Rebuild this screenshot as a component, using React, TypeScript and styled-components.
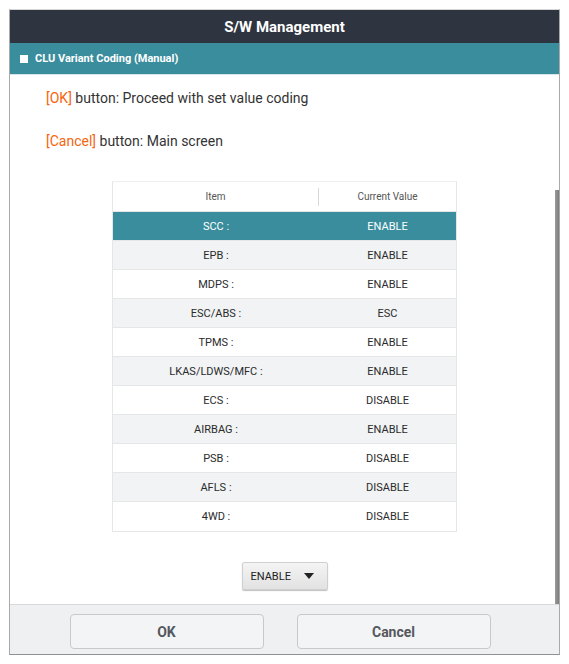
import * as React from 'react';
import styled, {createGlobalStyle} from 'styled-components';

const GlobalStyle = createGlobalStyle`
  html, body {
    margin: 0;
    padding: 0;
    background: #ffffff;
    font-family: Roboto, "Liberation Sans", Arial, sans-serif;
  }
`;

const Page = styled.div`
  padding: 9px 0 0 9px;
  width: 569px;
  height: 664px;
  box-sizing: border-box;
`;

const Dialog = styled.div`
  width: 551px;
  height: 646px;
  box-sizing: border-box;
  border-top: 1px solid #d6d6d6;
  border-left: 1px solid #a9a9a9;
  border-right: 1px solid #a9a9a9;
  border-bottom: 1px solid #8e9197;
  display: flex;
  flex-direction: column;
`;

const TitleBar = styled.div`
  height: 33px;
  background: #2e3440;
  color: #ffffff;
  font-size: 15px;
  font-weight: 700;
  display: flex;
  align-items: center;
  justify-content: center;
  flex: none;
`;

const SubBar = styled.div`
  height: 31px;
  background: #3a8d9d;
  border-bottom: 1px solid #d3e6ea;
  color: #ffffff;
  font-size: 11px;
  font-weight: 700;
  display: flex;
  align-items: center;
  gap: 7px;
  padding-left: 10px;
  flex: none;
`;

const Square = styled.span`
  width: 8px;
  height: 8px;
  background: #ffffff;
`;

const Body = styled.div`
  flex: 1;
  display: flex;
  min-height: 0;
`;

const Content = styled.div`
  flex: 1;
  display: flex;
  flex-direction: column;
  padding-top: 13px;
  padding-left: 4px;
`;

const ScrollTrack = styled.div`
  width: 4px;
  display: flex;
  flex-direction: column;
  padding-top: 115px;
`;

const ScrollThumb = styled.div`
  flex: 1;
  background: linear-gradient(to right, #9a9a9a, #7d7d7d);
`;

const Note = styled.div`
  font-size: 14px;
  line-height: 20px;
  color: #333333;
  padding-left: 32px;
  margin-bottom: 23px;
`;

const Key = styled.span`
  color: #f5650f;
`;

const Table = styled.div`
  width: 345px;
  margin: 7px auto 0 auto;
  border: 1px solid #e4e6e8;
  border-top-color: #eceef0;
  box-sizing: border-box;
`;

const HeaderRow = styled.div`
  display: grid;
  grid-template-columns: 206px 1fr;
  height: 30px;
  align-items: center;
  font-size: 10px;
  color: #555555;
  border-bottom: 1px solid #e4e6e8;
  box-sizing: border-box;
`;

const HeaderCell = styled.div<{divider?: boolean}>`
  text-align: center;
  height: 18px;
  line-height: 18px;
  border-right: ${(p) => (p.divider ? '1px solid #d6d8da' : 'none')};
`;

const Row = styled.div<{tone: 'sel' | 'alt' | 'plain'}>`
  display: grid;
  grid-template-columns: 206px 1fr;
  height: 29px;
  align-items: center;
  font-size: 11px;
  box-sizing: border-box;
  border-bottom: 1px solid #e4e6e8;
  background: ${(p) => (p.tone === 'sel' ? '#3a8d9d' : p.tone === 'alt' ? '#f1f3f4' : '#ffffff')};
  color: ${(p) => (p.tone === 'sel' ? '#ffffff' : '#2b2b2b')};
  &:last-child {
    border-bottom: none;
  }
`;

const Cell = styled.div`
  text-align: center;
`;

const Dropdown = styled.div`
  align-self: center;
  margin-top: 30px;
  width: 86px;
  height: 28px;
  box-sizing: border-box;
  border: 1px solid #cfcfcf;
  border-radius: 2px;
  background: linear-gradient(#f4f4f4, #e2e2e2);
  box-shadow: 0 1px 1px rgba(0, 0, 0, 0.25);
  display: flex;
  align-items: center;
  padding-left: 8px;
  gap: 13px;
  font-size: 11px;
  color: #222222;
`;

const Caret = styled.span`
  width: 0;
  height: 0;
  border-left: 5px solid transparent;
  border-right: 5px solid transparent;
  border-top: 6px solid #222222;
`;

const Footer = styled.div`
  height: 50px;
  flex: none;
  box-sizing: border-box;
  background: #eff0f2;
  border-top: 1px solid #d8d9db;
  display: flex;
  justify-content: center;
  gap: 33px;
  padding-top: 9px;
  padding-right: 9px;
`;

const Button = styled.div`
  width: 194px;
  height: 35px;
  box-sizing: border-box;
  border: 1px solid #c8c9cb;
  border-radius: 4px;
  background: #f3f4f5;
  display: flex;
  align-items: center;
  justify-content: center;
  font-size: 14px;
  font-weight: 700;
  color: #55585e;
`;

const rows: [string, string][] = [
  ['SCC :', 'ENABLE'],
  ['EPB :', 'ENABLE'],
  ['MDPS :', 'ENABLE'],
  ['ESC/ABS :', 'ESC'],
  ['TPMS :', 'ENABLE'],
  ['LKAS/LDWS/MFC :', 'ENABLE'],
  ['ECS :', 'DISABLE'],
  ['AIRBAG :', 'ENABLE'],
  ['PSB :', 'DISABLE'],
  ['AFLS :', 'DISABLE'],
  ['4WD :', 'DISABLE'],
];

const App: React.FunctionComponent = () => (
  <Page>
    <GlobalStyle />
    <Dialog>
      <TitleBar>S/W Management</TitleBar>
      <SubBar>
        <Square />
        CLU Variant Coding (Manual)
      </SubBar>
      <Body>
        <Content>
          <Note>
            <Key>[OK]</Key> button: Proceed with set value coding
          </Note>
          <Note>
            <Key>[Cancel]</Key> button: Main screen
          </Note>
          <Table>
            <HeaderRow>
              <HeaderCell divider>Item</HeaderCell>
              <HeaderCell>Current Value</HeaderCell>
            </HeaderRow>
            {rows.map(([item, value], i) => (
              <Row key={item} tone={i === 0 ? 'sel' : i % 2 === 1 ? 'alt' : 'plain'}>
                <Cell>{item}</Cell>
                <Cell>{value}</Cell>
              </Row>
            ))}
          </Table>
          <Dropdown>
            ENABLE
            <Caret />
          </Dropdown>
        </Content>
        <ScrollTrack>
          <ScrollThumb />
        </ScrollTrack>
      </Body>
      <Footer>
        <Button>OK</Button>
        <Button>Cancel</Button>
      </Footer>
    </Dialog>
  </Page>
);

export default App;
